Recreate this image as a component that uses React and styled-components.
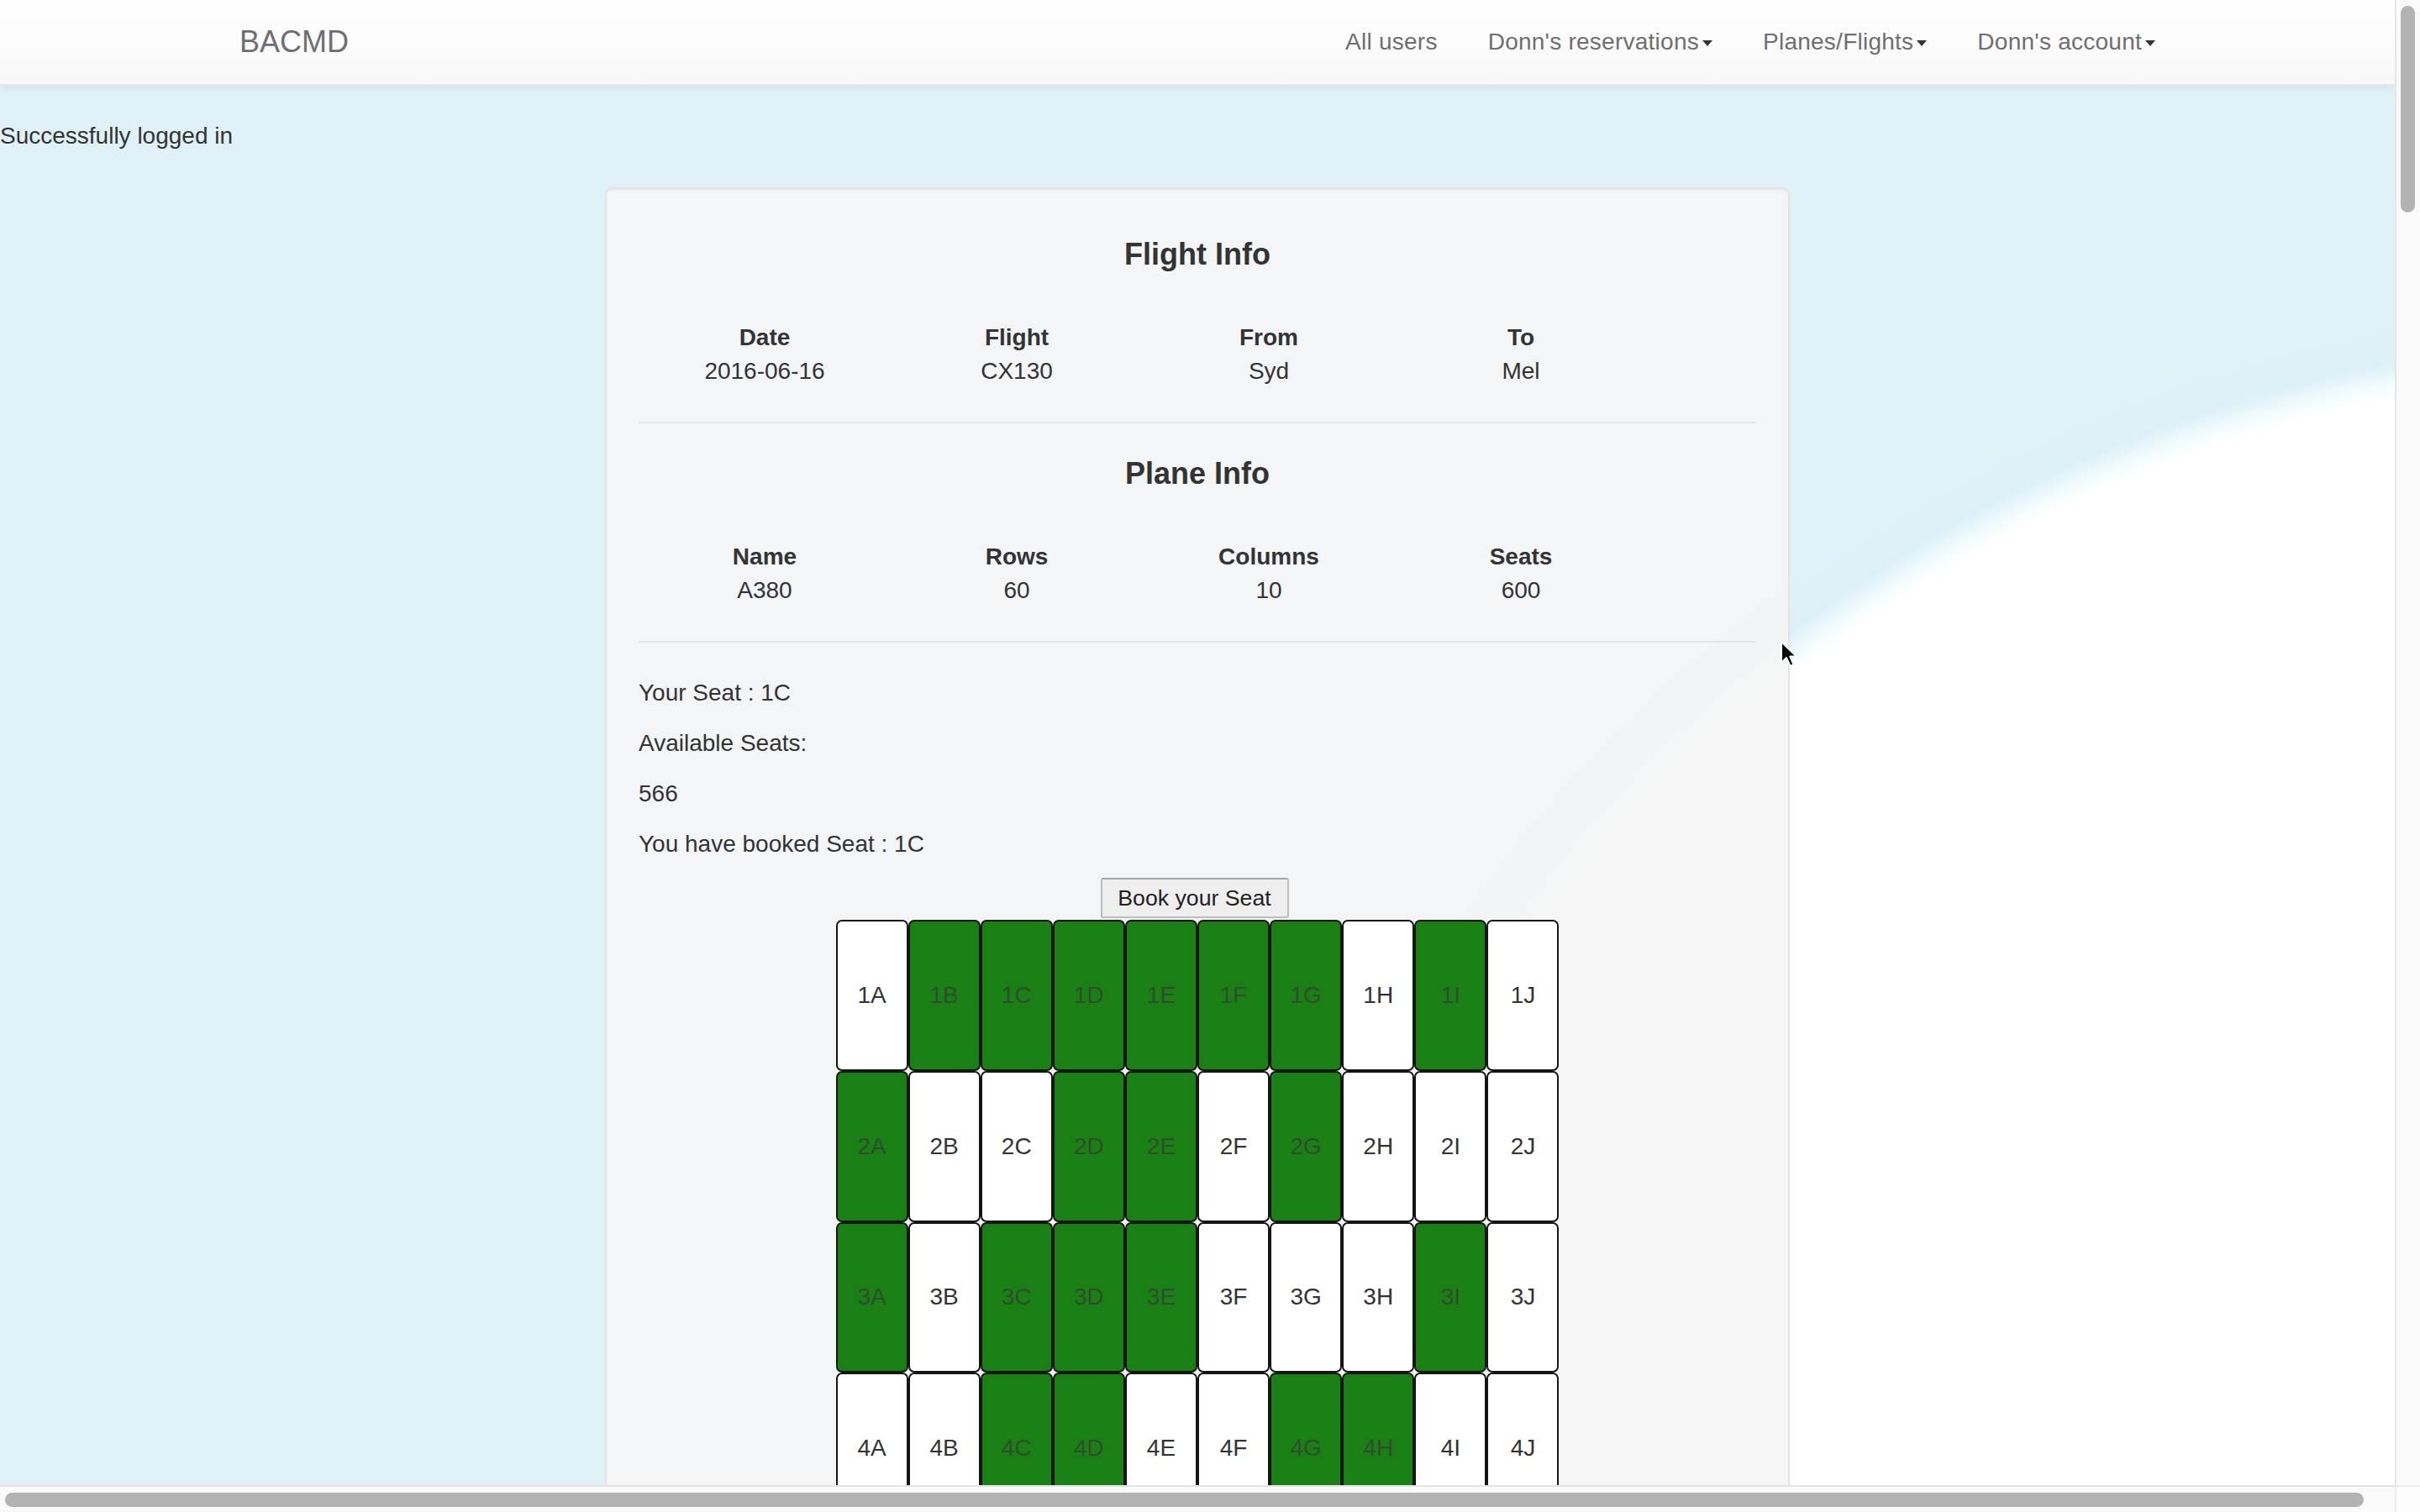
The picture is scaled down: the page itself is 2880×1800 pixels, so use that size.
import React from 'react';
import styled, { createGlobalStyle } from 'styled-components';

const GlobalStyle = createGlobalStyle`
    html, body {
        margin: 0;
        padding: 0;
        overflow: hidden;
    }
    body {
        font-family: "Liberation Sans", Arial, Helvetica, sans-serif;
        font-size: 28px;
        line-height: 40px;
        color: #333;
    }
    * {
        box-sizing: border-box;
    }
`

const Screen = styled.div`
    width: 100vw;
    height: 100vh;
    display: grid;
    grid-template-columns: 1fr 30px;
    grid-template-rows: 1fr 32px;
`

const Viewport = styled.div`
    position: relative;
    overflow: hidden;
    background-color: #e0f1f8;
    background-image: radial-gradient(
        circle 1670px at 3161px 2090px,
        #ffffff 0,
        #ffffff 1644px,
        #f3fcfe 1662px,
        #dcf0f8 1688px,
        #e0f1f8 1740px
    );
`

const NavBar = styled.nav`
    height: 102px;
    background-image: linear-gradient(to bottom, #ffffff 0, #f8f8f8 100%);
    border-bottom: 2px solid #e7e7e7;
    box-shadow: 0 2px 10px rgba(0, 0, 0, 0.075);
`

const NavContainer = styled.div`
    width: 2340px;
    margin: 0 auto;
    padding: 0 30px;
    display: flex;
    justify-content: space-between;
    align-items: center;
    height: 100px;
`

const Brand = styled.a`
    margin-left: -30px;
    padding: 0 30px;
    font-size: 36px;
    color: #6f6f6f;
    text-decoration: none;
`

const NavLinks = styled.div`
    display: flex;
    align-items: center;
    margin-right: -30px;
`

const NavLink = styled.a`
    padding: 0 30px;
    font-size: 28px;
    letter-spacing: 0.25px;
    color: #6f6f6f;
    text-decoration: none;
    display: flex;
    align-items: center;
`

const Caret = styled.span`
    display: inline-block;
    margin-left: 4px;
    margin-top: 3px;
    border-top: 7px solid #333;
    border-left: 6px solid transparent;
    border-right: 6px solid transparent;
`

const Flash = styled.p`
    margin: 40px 0 0;
    font-size: 28px;
    line-height: 40px;
`

const Well = styled.div`
    width: 1410px;
    margin: 41px auto 0;
    padding: 38px;
    background: rgba(245, 245, 245, 0.88);
    border: 2px solid #e3e3e3;
    border-radius: 8px;
    box-shadow: inset 0 2px 2px rgba(0, 0, 0, 0.04);
`

const Title = styled.h4`
    margin: 20px 0 0;
    font-size: 36px;
    line-height: 40px;
    font-weight: bold;
    text-align: center;
`

const InfoTable = styled.div`
    margin-top: 59px;
    display: grid;
    grid-template-columns: repeat(4, 300px);
    text-align: center;
    line-height: 40px;
`

const HeadCell = styled.div`
    font-weight: bold;
`

const Divider = styled.hr`
    margin: 40px 0;
    border: 0;
    border-top: 2px solid #e6e6e6;
`

const Line = styled.p`
    margin: 0 0 20px;
    line-height: 40px;
`

const ButtonRow = styled.div`
    display: flex;
    justify-content: center;
    padding-right: 7px;
`

const BookButton = styled.button`
    width: 224px;
    height: 48px;
    padding: 0;
    font-family: "Liberation Sans", Arial, sans-serif;
    font-size: 26.7px;
    color: #222;
    background: #efefef;
    border: 2px solid #bdbdbd;
    border-top-color: #a3a3a3;
    border-radius: 3px;
`

const SeatMap = styled.div`
    margin-top: 2px;
    display: grid;
    grid-template-columns: repeat(10, 86.1px);
    grid-auto-rows: 179.8px;
    justify-content: center;
`

const Seat = styled.div`
    display: flex;
    align-items: center;
    justify-content: center;
    font-size: 28px;
    border: 2px solid #151515;
    border-radius: 7px;
    background: ${p => p.$taken ? '#1a7f14' : '#ffffff'};
    color: ${p => p.$taken ? '#2f4d2c' : '#333'};
`

const Cursor = styled.svg`
    position: absolute;
    left: 2118px;
    top: 762px;
    width: 22px;
    height: 34px;
`

const VScroll = styled.div`
    background: #fafafa;
    border-left: 2px solid #e6e6e6;
    padding: 7px 6px 0 5px;
`

const VThumb = styled.div`
    width: 17px;
    height: 246px;
    border-radius: 9px;
    background: #b3b3b3;
`

const HScroll = styled.div`
    background: #fafafa;
    border-top: 2px solid #e3e3e3;
    padding: 7px 0 0 6px;
`

const HThumb = styled.div`
    width: 2807px;
    height: 17px;
    border-radius: 9px;
    background: #b3b3b3;
`

const Corner = styled.div`
    background: #fdfdfd;
    border-top: 2px solid #ececec;
    border-left: 2px solid #ececec;
`

const flightInfo = [
    ['Date', '2016-06-16'],
    ['Flight', 'CX130'],
    ['From', 'Syd'],
    ['To', 'Mel'],
]

const planeInfo = [
    ['Name', 'A380'],
    ['Rows', '60'],
    ['Columns', '10'],
    ['Seats', '600'],
]

// G = taken (green), W = free
const seatRows = [
    'WGGGGGGWGW',
    'GWWGGWGWWW',
    'GWGGGWWWGW',
    'WWGGWWGGWW',
]

const letters = 'ABCDEFGHIJ'

const Info = ({ items }) => (
    <InfoTable>
        {items.map(([head]) => <HeadCell key={head}>{head}</HeadCell>)}
        {items.map(([head, value]) => <div key={head + 'v'}>{value}</div>)}
    </InfoTable>
)

const App = () => {
    return (
        <Screen>
            <GlobalStyle />
            <Viewport>
                <NavBar>
                    <NavContainer>
                        <Brand>BACMD</Brand>
                        <NavLinks>
                            <NavLink>All users</NavLink>
                            <NavLink>Donn's reservations<Caret /></NavLink>
                            <NavLink>Planes/Flights<Caret /></NavLink>
                            <NavLink>Donn's account<Caret /></NavLink>
                        </NavLinks>
                    </NavContainer>
                </NavBar>
                <Flash>Successfully logged in</Flash>
                <Well>
                    <Title>Flight Info</Title>
                    <Info items={flightInfo} />
                    <Divider />
                    <Title>Plane Info</Title>
                    <Info items={planeInfo} />
                    <Divider />
                    <Line>Your Seat : 1C</Line>
                    <Line>Available Seats:</Line>
                    <Line>566</Line>
                    <Line>You have booked Seat : 1C</Line>
                    <ButtonRow>
                        <BookButton>Book your Seat</BookButton>
                    </ButtonRow>
                    <SeatMap>
                        {seatRows.map((row, r) =>
                            row.split('').map((s, c) => (
                                <Seat key={`${r}-${c}`} $taken={s === 'G'}>
                                    {r + 1}{letters[c]}
                                </Seat>
                            ))
                        )}
                    </SeatMap>
                </Well>
                <Cursor viewBox="0 0 22 34">
                    <path
                        d="M2 2 L2 27 L8 21 L12.5 31 L16.5 29.2 L12.2 19.6 L20 19.6 Z"
                        fill="#000"
                        stroke="#fff"
                        strokeWidth="2"
                        strokeLinejoin="round"
                    />
                </Cursor>
            </Viewport>
            <VScroll>
                <VThumb />
            </VScroll>
            <HScroll>
                <HThumb />
            </HScroll>
            <Corner />
        </Screen>
    )
}

export default App
